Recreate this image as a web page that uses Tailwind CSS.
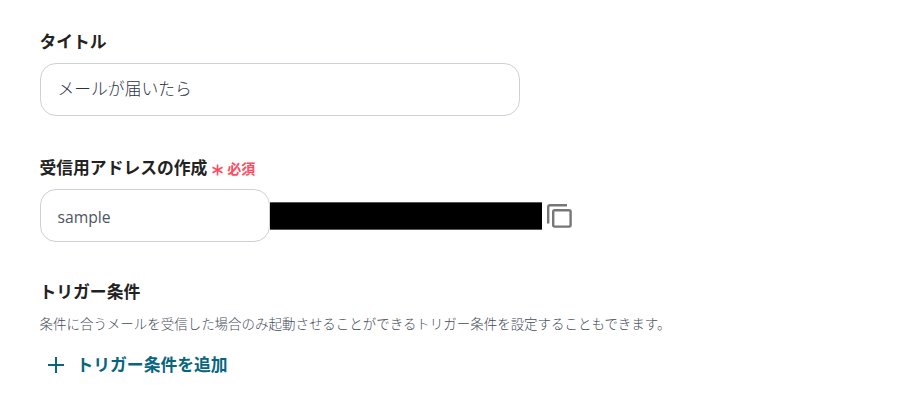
<!DOCTYPE html>
<html lang="ja"><head><meta charset="utf-8"><script src="https://cdn.jsdelivr.net/npm/@tailwindcss/browser@4"></script></head>
<body class="bg-white font-['Noto_Sans','Noto_Sans_CJK_JP',sans-serif] text-[#222]">
<main class="flex flex-col items-start pl-[39.5px] pt-[30px]">
<label class="text-[16.8px] leading-6 font-bold">タイトル</label>
<div class="mt-[9px] flex h-[53px] w-[480px] items-center rounded-2xl border border-[#ced0d8] pl-[17px] pb-0.5 font-['Noto_Sans_CJK_JP',sans-serif] text-[16.8px] font-light text-[#2b333f]">メールが届いたら</div>
<div class="mt-[40px] flex h-6 items-center text-[16.8px] font-bold">受信用アドレスの作成<span class="mt-px ml-[5px] flex items-center gap-1 text-[14px] text-[#ff4a60]"><svg class="mt-0.5 h-3 w-[11px]" viewBox="0 0 11 12" stroke="currentColor" stroke-width="1.6"><path d="M5.5 0.5v11M0.5 3.2l10 5.6M10.5 3.2l-10 5.6"/></svg>必須</span></div>
<div class="mt-[9px] flex items-center"><div class="flex h-[53px] w-[230px] items-center rounded-2xl border border-[#ced0d8] pl-[17px] pt-1 font-['Open_Sans','Noto_Sans',sans-serif] text-[15.7px] text-[#4b5563]">sample</div><div class="h-7 w-[272px] border-y border-[#555] bg-black"></div><svg class="mt-px ml-[5px] h-[24px] w-[25px]" viewBox="0 0 25 24" fill="none" stroke="#777" stroke-width="2.4"><path d="M1.2 19.5V3a1.8 1.8 0 0 1 1.8-1.8H20"/><rect x="6.2" y="6.2" width="17.4" height="16.4" rx="1.5"/></svg></div>
<h2 class="mt-[38px] text-[16.8px] leading-6 font-bold">トリガー条件</h2>
<p class="mt-[9px] font-['Noto_Sans_CJK_JP',sans-serif] text-[13.48px] leading-5 font-light text-[#434c5a]">条件に合うメールを受信した場合のみ起動させることができるトリガー条件を設定することもできます。</p>
<button class="mt-[19.5px] ml-[8.5px] flex h-6 items-center gap-[12.5px] text-[16.8px] font-bold text-[#07657f]"><svg class="size-4" viewBox="0 0 16 16" stroke="currentColor" stroke-width="2"><path d="M8 0v16M0 8h16"/></svg>トリガー条件を追加</button>
</main></body></html>
